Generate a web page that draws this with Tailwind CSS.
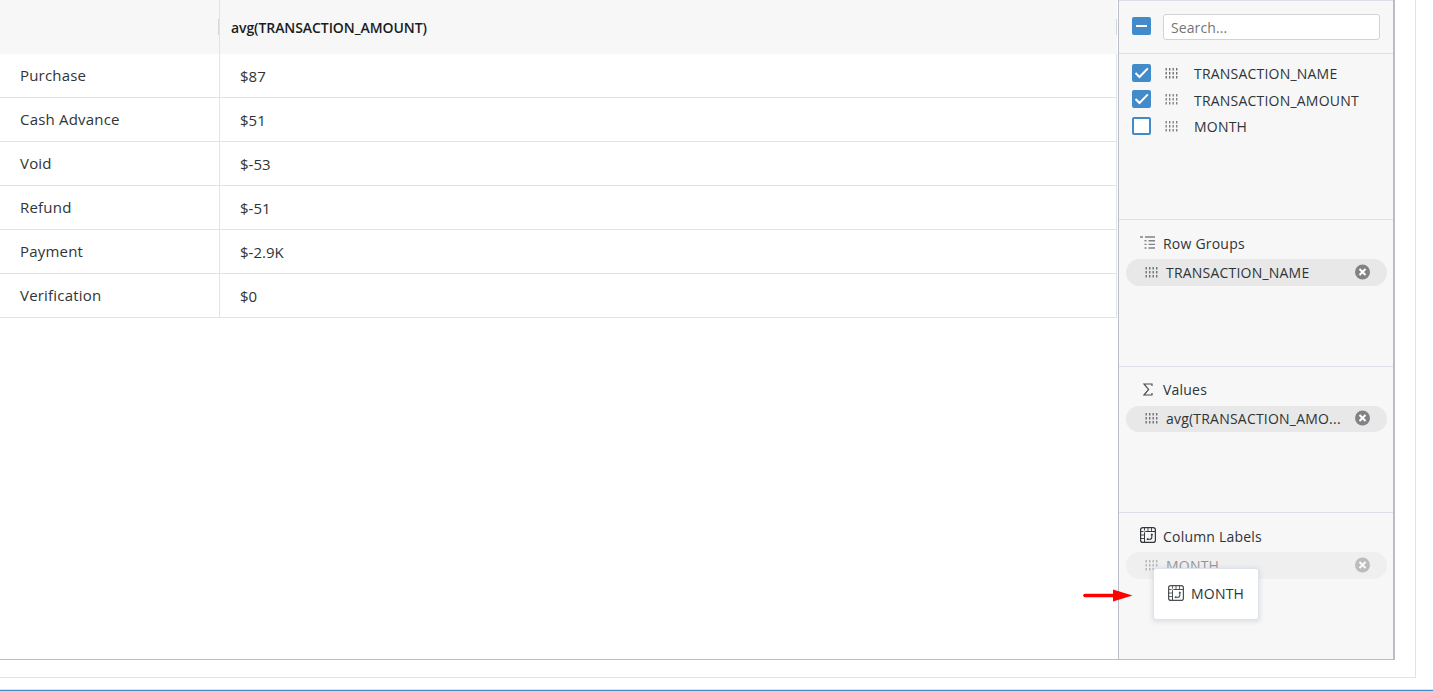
<!DOCTYPE html>
<html lang="en">

<head>
  <meta charset="UTF-8">
  <meta name="viewport" content="width=device-width, initial-scale=1.0">
  <title>Pivot Table</title>
  <script src="https://cdn.jsdelivr.net/npm/@tailwindcss/browser@4"></script>
</head>

<body class="bg-white h-screen overflow-hidden font-['Open_Sans',sans-serif] text-sm text-[#2f3437]">

  <!-- Shared icons -->
  <svg class="hidden">
    <symbol id="grip" viewBox="0 0 13 11">
      <path d="M1.2 0v11M4.7 0v11M8.2 0v11M11.7 0v11" stroke="currentColor" stroke-width="1.4" stroke-dasharray="2.6 1.4" fill="none" />
    </symbol>
    <symbol id="remove" viewBox="0 0 16 16">
      <circle cx="7.5" cy="8" r="7.5" fill="#808285" />
      <path d="M4.5 5l6 6M10.5 5l-6 6" stroke="#fff" stroke-width="2" />
    </symbol>
    <symbol id="check" viewBox="0 0 18 18">
      <path d="M3 9l4 4 8.3-8.6" stroke="#fff" stroke-width="2" fill="none" />
    </symbol>
    <symbol id="pivot" viewBox="0 0 16 16">
      <g fill="none" stroke="currentColor">
        <rect x="0.6" y="0.6" width="14.8" height="14.8" rx="2.2" stroke-width="1.2" />
        <path d="M4.5 15V5.5q0-1 1-1H15" stroke-width="1" />
        <path d="M4.5 0.6v3M8 0.6v3.4M11.5 0.6v3.4M0.6 4.5h3M0.6 8h3.4M0.6 11.5h3.4" stroke-width="0.9" />
        <path d="M7.2 12.2h2.6q2 0 2-2V7" stroke-width="1.1" />
      </g>
      <path d="M8.3 10.8v2.8L6.3 12.2zM10.4 8.2h2.8L11.8 6.3z" fill="currentColor" />
    </symbol>
  </svg>

  <div class="w-[1416px] h-[678px] border-r border-b border-[#e2e3e5]">
    <div class="flex w-[1395px] h-[660px] border-b border-r-2 border-[#babec9]">

      <!-- Table -->
      <div class="w-[1118px] pr-px">
        <div class="flex h-[54px] bg-[#f7f7f7] font-semibold text-[#181d1f]">
          <div class="flex w-[220px] items-center justify-end border-r border-[#e2e3e5]">
            <div class="w-px h-4 bg-[#d5d7da]"></div>
          </div>
          <div class="flex flex-1 items-center justify-between pl-[11px]">
            <span class="h-5 leading-5 mt-0.5 tracking-[-0.08px]">avg(TRANSACTION_AMOUNT)</span>
            <div class="w-px h-4 bg-[#d5d7da]"></div>
          </div>
        </div>
        <div class="grid grid-cols-[220px_1fr] auto-rows-[44px] text-[15px] leading-[43px] *:border-r *:border-b *:border-[#e2e3e5]">
          <div class="pl-5 tracking-[0.2px]">Purchase</div>
          <div class="pl-5 pt-px">$87</div>
          <div class="pl-5 tracking-[0.2px]">Cash Advance</div>
          <div class="pl-5 pt-px">$51</div>
          <div class="pl-5 tracking-[0.2px]">Void</div>
          <div class="pl-5 pt-px">$-53</div>
          <div class="pl-5 tracking-[0.2px]">Refund</div>
          <div class="pl-5 pt-px">$-51</div>
          <div class="pl-5 tracking-[0.2px]">Payment</div>
          <div class="pl-5 pt-px">$-2.9K</div>
          <div class="pl-5 tracking-[0.2px]">Verification</div>
          <div class="pl-5 pt-px">$0</div>
        </div>
      </div>

      <!-- Side panel -->
      <div class="flex-1 bg-[#f7f7f7] border-l border-[#babec9] tracking-[0.21px]">
        <div class="flex h-[54px] border-y border-[#dddfe8] pl-[13px] pt-[13px]">
          <div class="flex w-[19px] h-[18px] mt-[3px] items-center justify-center rounded-xs bg-[#428bca]">
            <div class="w-[11px] h-0.5 bg-white"></div>
          </div>
          <input type="text" placeholder="Search..."
            class="w-[217px] h-[26px] ml-3 px-[7px] rounded-[3px] border border-[#d3d3d5] bg-white tracking-[0.1px] placeholder:text-[#757575]">
        </div>

        <div class="h-[166px] border-b border-[#dddfe8] pl-[13px] pt-[7px]">
          <div class="flex h-[26.5px] items-center">
            <svg class="w-[19px] h-[18px] -mt-0.5 rounded-xs bg-[#428bca]"><use href="#check" /></svg>
            <svg class="w-[13px] h-[11px] ml-[14px] -mt-0.5 text-[#6d7173]"><use href="#grip" /></svg>
            <span class="ml-4">TRANSACTION_NAME</span>
          </div>
          <div class="flex h-[26.5px] items-center">
            <svg class="w-[19px] h-[18px] -mt-[3px] rounded-xs bg-[#428bca]"><use href="#check" /></svg>
            <svg class="w-[13px] h-[11px] ml-[14px] -mt-[3px] text-[#808285]"><use href="#grip" /></svg>
            <span class="ml-4">TRANSACTION_AMOUNT</span>
          </div>
          <div class="flex h-[26.5px] items-center">
            <div class="w-[19px] h-[18px] -mt-0.5 rounded-xs border-2 border-[#428bca] bg-white"></div>
            <svg class="w-[13px] h-[11px] ml-[14px] -mt-0.5 text-[#808285]"><use href="#grip" /></svg>
            <span class="ml-4">MONTH</span>
          </div>
        </div>

        <div class="h-[147px] border-b border-[#dddfe8] pl-[7px] pr-1.5 pt-[11px]">
          <div class="flex h-[26px] items-center pl-[14px] mb-0.5">
            <svg class="w-4 h-[13px] -mt-1" viewBox="0 0 16 13" fill="none" stroke="#808285" stroke-width="1.4">
              <path d="M0 1h3M5 1h10M4.5 4.7h2M8.5 4.7H15M4.5 8.4h2M8.5 8.4H15M4.5 12h2M8.5 12H15" />
            </svg>
            <span class="ml-[7px]">Row Groups</span>
          </div>
          <div class="flex h-[27px] items-center rounded-full bg-[#e8e8e8] pl-[19px] pr-4">
            <svg class="w-[13px] h-[11px] text-[#6d7173]"><use href="#grip" /></svg>
            <span class="flex-1 ml-2">TRANSACTION_NAME</span>
            <svg class="w-4 h-4 -mt-0.5"><use href="#remove" /></svg>
          </div>
        </div>

        <div class="h-[146px] border-b border-[#dddfe8] pl-[7px] pr-1.5 pt-2.5">
          <div class="flex h-[26px] items-center pl-[14px] mb-[3px]">
            <svg class="w-4 h-[13px] -mt-px" viewBox="0 0 16 13" fill="none" stroke="#4b5054" stroke-width="1.2">
              <path d="M12 3V1H4l4.6 5.4L4 12h8v-2" />
            </svg>
            <span class="ml-[7px]">Values</span>
          </div>
          <div class="flex h-[26px] items-center rounded-full bg-[#e8e8e8] pl-[19px] pr-4">
            <svg class="w-[13px] h-[11px] -mt-0.5 text-[#6d7173]"><use href="#grip" /></svg>
            <span class="flex-1 ml-2">avg(TRANSACTION_AMO...</span>
            <svg class="w-4 h-4 -mt-0.5"><use href="#remove" /></svg>
          </div>
        </div>

        <div class="relative h-[146px] pl-[7px] pr-1.5 pt-[11px]">
          <div class="flex h-[26px] items-center pl-[14px] mb-0.5">
            <svg class="w-4 h-4 -mt-1 text-[#33383b]"><use href="#pivot" /></svg>
            <span class="ml-[7px]">Column Labels</span>
          </div>
          <div class="flex h-[27px] items-center rounded-full bg-[#e8e8e8] pl-[19px] pr-4 opacity-50">
            <svg class="w-[13px] h-[11px] text-[#6d7173]"><use href="#grip" /></svg>
            <span class="flex-1 ml-2">MONTH</span>
            <svg class="w-4 h-4 -mt-0.5"><use href="#remove" /></svg>
          </div>

          <!-- Dragged item -->
          <div class="absolute left-[34px] top-[55px] flex w-[106px] h-[52px] items-center rounded-[3px] border border-[#dde2eb] bg-white pl-[14px] shadow-[0_1px_4px_1px_rgba(186,191,199,0.4)]">
            <svg class="w-4 h-4 -mt-0.5 text-[#4b5054]"><use href="#pivot" /></svg>
            <span class="ml-[7px] -mt-px">MONTH</span>
          </div>

          <!-- Pointer arrow -->
          <svg class="absolute left-[-36px] top-[76px] w-[50px] h-[13px]" viewBox="0 0 50 13">
            <path d="M2 6.5h32" stroke="#f00" stroke-width="3.6" stroke-linecap="round" />
            <path d="M30 0.6L49.5 6.5L30 12.4z" fill="#f00" />
          </svg>
        </div>
      </div>
    </div>
  </div>

  <div class="h-3 border-b border-[#dfe3e8]"></div>
  <div class="h-px bg-[#428bca]"></div>
</body>

</html>
